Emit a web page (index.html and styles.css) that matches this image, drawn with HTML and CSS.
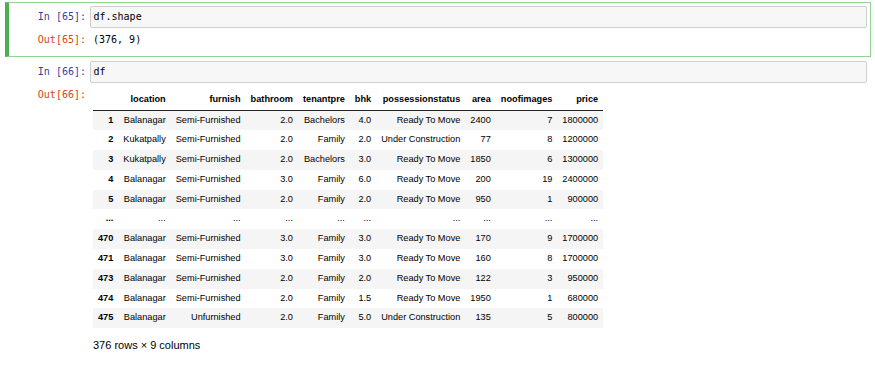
FILE: index.html
```html
<!DOCTYPE html>
<html lang="en">
<head>
  <meta charset="UTF-8" />
  <title>Notebook</title>
  <link rel="stylesheet" href="styles.css">
</head>
<body>
  <div class="notebook">
    <div class="cell selected">
      <div class="row input">
        <div class="prompt in-prompt">In&nbsp;[65]:</div>
        <div class="input-area">df.shape</div>
      </div>
      <div class="row output">
        <div class="prompt out-prompt">Out[65]:</div>
        <div class="output-area"><pre class="result">(376, 9)</pre></div>
      </div>
    </div>

    <div class="cell">
      <div class="row input">
        <div class="prompt in-prompt">In&nbsp;[66]:</div>
        <div class="input-area">df</div>
      </div>
      <div class="row output">
        <div class="prompt out-prompt">Out[66]:</div>
        <div class="output-area">
          <table class="dataframe">
            <thead>
              <tr>
                <th></th>
                <th>location</th>
                <th>furnish</th>
                <th>bathroom</th>
                <th>tenantpre</th>
                <th>bhk</th>
                <th>possessionstatus</th>
                <th>area</th>
                <th>noofimages</th>
                <th>price</th>
              </tr>
            </thead>
            <tbody>
              <tr><th>1</th><td>Balanagar</td><td>Semi-Furnished</td><td>2.0</td><td>Bachelors</td><td>4.0</td><td>Ready To Move</td><td>2400</td><td>7</td><td>1800000</td></tr>
              <tr><th>2</th><td>Kukatpally</td><td>Semi-Furnished</td><td>2.0</td><td>Family</td><td>2.0</td><td>Under Construction</td><td>77</td><td>8</td><td>1200000</td></tr>
              <tr><th>3</th><td>Kukatpally</td><td>Semi-Furnished</td><td>2.0</td><td>Bachelors</td><td>3.0</td><td>Ready To Move</td><td>1850</td><td>6</td><td>1300000</td></tr>
              <tr><th>4</th><td>Balanagar</td><td>Semi-Furnished</td><td>3.0</td><td>Family</td><td>6.0</td><td>Ready To Move</td><td>200</td><td>19</td><td>2400000</td></tr>
              <tr><th>5</th><td>Balanagar</td><td>Semi-Furnished</td><td>2.0</td><td>Family</td><td>2.0</td><td>Ready To Move</td><td>950</td><td>1</td><td>900000</td></tr>
              <tr><th>...</th><td>...</td><td>...</td><td>...</td><td>...</td><td>...</td><td>...</td><td>...</td><td>...</td><td>...</td></tr>
              <tr><th>470</th><td>Balanagar</td><td>Semi-Furnished</td><td>3.0</td><td>Family</td><td>3.0</td><td>Ready To Move</td><td>170</td><td>9</td><td>1700000</td></tr>
              <tr><th>471</th><td>Balanagar</td><td>Semi-Furnished</td><td>3.0</td><td>Family</td><td>3.0</td><td>Ready To Move</td><td>160</td><td>8</td><td>1700000</td></tr>
              <tr><th>473</th><td>Balanagar</td><td>Semi-Furnished</td><td>2.0</td><td>Family</td><td>2.0</td><td>Ready To Move</td><td>122</td><td>3</td><td>950000</td></tr>
              <tr><th>474</th><td>Balanagar</td><td>Semi-Furnished</td><td>2.0</td><td>Family</td><td>1.5</td><td>Ready To Move</td><td>1950</td><td>1</td><td>680000</td></tr>
              <tr><th>475</th><td>Balanagar</td><td>Unfurnished</td><td>2.0</td><td>Family</td><td>5.0</td><td>Under Construction</td><td>135</td><td>5</td><td>800000</td></tr>
            </tbody>
          </table>
          <p class="shape-note">376 rows × 9 columns</p>
        </div>
      </div>
    </div>
  </div>
</body>
</html>
```

FILE: styles.css
```css
html, body {
  margin: 0;
  padding: 0;
  background: white;
  color: black;
  font-family: 'Liberation Sans', Arial, sans-serif;
}

.notebook {
  padding-top: 2px;
}

.cell {
  margin-left: 5px;
  width: 855px;
  padding: 3px;
  border: 1px solid transparent;
  border-left-width: 4px;
}

.cell.selected {
  border-color: #8fd490;
  border-left-color: #4caf50;
}

.row {
  display: flex;
  align-items: flex-start;
}

.prompt {
  flex: none;
  width: 74px;
  padding-right: 3px;
  text-align: right;
  font-family: 'DejaVu Sans Mono', 'Liberation Mono', monospace;
  font-size: 10px;
  white-space: nowrap;
}

.in-prompt {
  color: #303f9f;
  line-height: 22px;
}

.out-prompt {
  color: #d84315;
  line-height: 12px;
  padding-top: 6px;
}

.input-area {
  flex: 1;
  height: 20px;
  margin-left: 0.5px;
  padding-left: 3px;
  background: #f7f7f7;
  border: 1px solid #cfcfcf;
  border-radius: 2px;
  font-family: 'DejaVu Sans Mono', 'Liberation Mono', monospace;
  font-size: 10px;
  line-height: 20px;
}

.output-area {
  flex: 1;
  padding-top: 6px;
  padding-left: 4px;
}

.result {
  margin: 0;
  padding-bottom: 7px;
  font-family: 'DejaVu Sans Mono', 'Liberation Mono', monospace;
  font-size: 10px;
  line-height: 12px;
}

.dataframe {
  margin-top: 1px;
  border-collapse: collapse;
  border-spacing: 0;
  font-size: 9.2px;
}

.dataframe th,
.dataframe td {
  padding: 0 5px;
  text-align: right;
  white-space: nowrap;
  vertical-align: middle;
  line-height: 19.8px;
}

.dataframe th {
  font-weight: bold;
}

.dataframe thead th {
  line-height: 19.5px;
  border-bottom: 1px solid #222;
}

.dataframe tbody tr:nth-child(odd) {
  background: #f5f5f5;
}

.shape-note {
  margin: 11px 0 0 0;
  font-size: 11px;
  line-height: 13px;
}
```
